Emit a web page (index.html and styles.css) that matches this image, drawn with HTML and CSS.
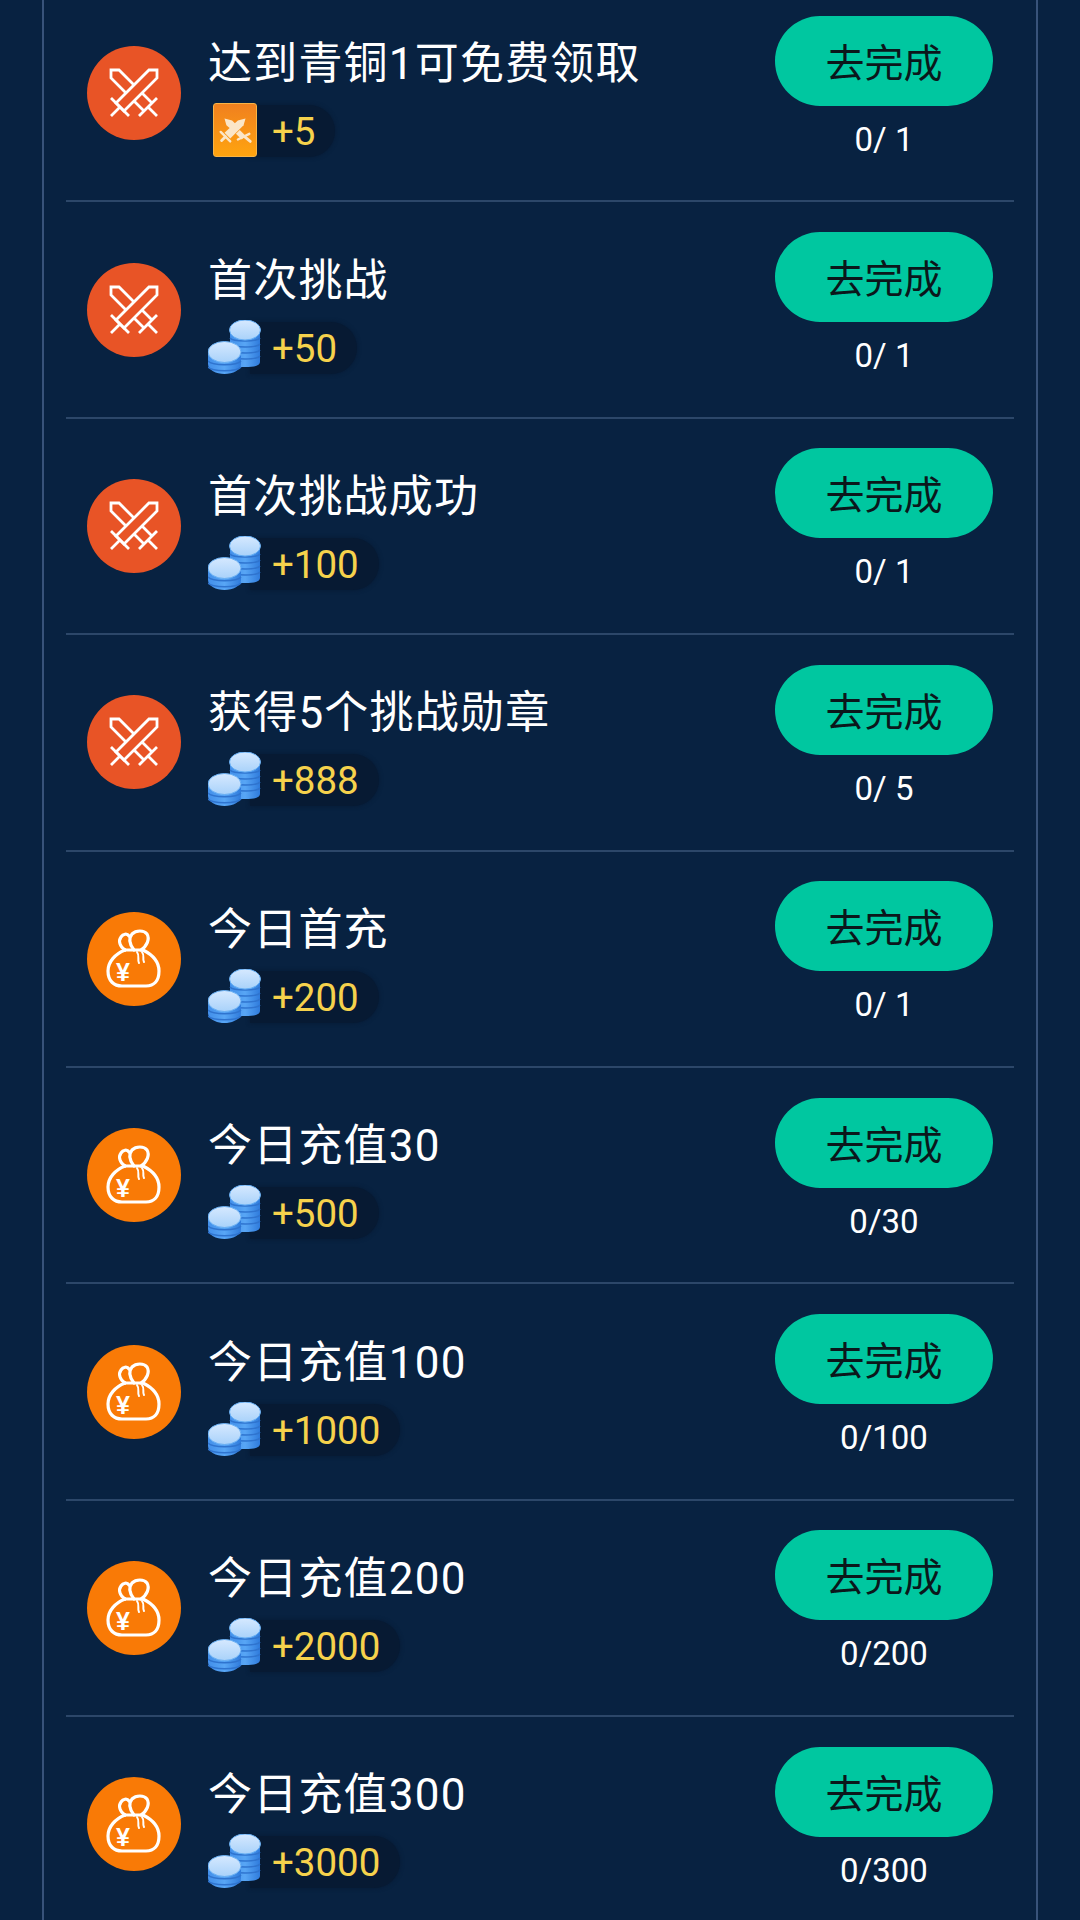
FILE: index.html
```html
<!DOCTYPE html>
<html>
<head>
  <meta charset="UTF-8">
  <title>Tasks</title>
  <meta name="viewport" content="width=device-width, initial-scale=1.0">
  <link rel="stylesheet" href="styles.css">
</head>
<body>
  <svg class="defs" width="0" height="0">
    <defs>
      <symbol id="swords" viewBox="0 0 94 94">
        <g fill="none" stroke="#fff" stroke-width="2.800">
          <path d="M62 24H70V32L37 65L29 57Z"/>
          <path d="M24 52L42 70M33 61L24 70"/>
          <path d="M47 39L32 24H24V32L39 47"/>
          <path d="M55 47L65 57M47 55L57 65M52 70L70 52M61 61L70 70"/>
        </g>
      </symbol>
      <symbol id="bag" viewBox="0 0 94 94">
        <g fill="none" stroke="#fff" stroke-width="3.200" stroke-linecap="round" stroke-linejoin="round">
          <path d="M38 38C28 42 21 50 21 59C21 69 27 74 35 74H59C67 74 72 69 72 59C72 50 66 43 56 38"/>
          <path d="M38 38H56"/>
          <path d="M38 38C33 35 31 29 34 25C36 22 40 21 42 24"/>
          <path d="M47 38C43 33 41 27 45 22C49 18 57 18 60 22C63 27 60 34 54 38"/>
        </g>
        <path d="M50 40C53 44 50 47 52 51M55 40C58 44 55 46 57 50" fill="none" stroke="#fff" stroke-width="2" stroke-linecap="round"/>
        <text x="36" y="69" text-anchor="middle" fill="#fff" font-family="Liberation Sans" font-weight="700" font-size="25">¥</text>
      </symbol>
      <symbol id="card-swords" viewBox="0 0 44 54">
        <g fill="#fbe6c8">
          <path d="M33 15L31 22L17 36L11 30L25 17Z"/>
          <path d="M11 15L19 17L25 23L20 28L13 22Z"/>
          <path d="M27 27L33 33L29 37L23 31Z"/>
        </g>
        <g fill="none" stroke="#fbe6c8" stroke-linecap="round">
          <path d="M7 29L17 39M25 37L37 31" stroke-width="2.500"/>
          <path d="M12 34L8 38M32 34L38 39" stroke-width="3"/>
        </g>
      </symbol>
      <linearGradient id="coinTop" x1="0" y1="0" x2="0" y2="1">
        <stop offset="0" stop-color="#d6e9ff"/>
        <stop offset="1" stop-color="#a9d2fa"/>
      </linearGradient>
      <linearGradient id="coinSide" x1="0" y1="0" x2="1" y2="0">
        <stop offset="0" stop-color="#428fea"/>
        <stop offset="0.5" stop-color="#58a6f5"/>
        <stop offset="1" stop-color="#2f7bdc"/>
      </linearGradient>
      <symbol id="coins" viewBox="0 0 54 54">
        <path d="M22 10H52V42C52 46 46 47 37 47C28 47 22 46 22 42Z" fill="url(#coinSide)"/>
        <path d="M22 18C25 22 49 22 52 18M22 24C25 28 49 28 52 24M22 30C25 34 49 34 52 30M22 36C25 40 49 40 52 36" fill="none" stroke="#2f74cf" stroke-width="1.500"/>
        <ellipse cx="37" cy="10" rx="15.500" ry="10" fill="url(#coinTop)" stroke="#67aff4" stroke-width="1"/>
        <path d="M0 33H33V44C33 50 25 54 16.500 54C8 54 0 50 0 44Z" fill="url(#coinSide)"/>
        <path d="M0 41C4 46 29 46 33 41M0 47C4 52 29 52 33 47" fill="none" stroke="#2f74cf" stroke-width="1.500"/>
        <ellipse cx="16.500" cy="32" rx="16.500" ry="10.500" fill="url(#coinTop)" stroke="#67aff4" stroke-width="1"/>
      </symbol>
    </defs>
  </svg>

  <div class="panel">
    <div class="task">
      <div class="badge badge-fight"><svg><use href="#swords"/></svg></div>
      <div class="info">
        <div class="title">达到青铜1可免费领取</div>
        <div class="reward">
          <span class="reward-icon"><span class="card"><svg><use href="#card-swords"/></svg></span></span>
          <span class="amount">+5</span>
        </div>
      </div>
      <div class="action">
        <div class="go">去完成</div>
        <div class="count">0/ 1</div>
      </div>
    </div>

    <div class="task">
      <div class="badge badge-fight"><svg><use href="#swords"/></svg></div>
      <div class="info">
        <div class="title">首次挑战</div>
        <div class="reward">
          <span class="reward-icon"><svg><use href="#coins"/></svg></span>
          <span class="amount">+50</span>
        </div>
      </div>
      <div class="action">
        <div class="go">去完成</div>
        <div class="count">0/ 1</div>
      </div>
    </div>

    <div class="task">
      <div class="badge badge-fight"><svg><use href="#swords"/></svg></div>
      <div class="info">
        <div class="title">首次挑战成功</div>
        <div class="reward">
          <span class="reward-icon"><svg><use href="#coins"/></svg></span>
          <span class="amount">+100</span>
        </div>
      </div>
      <div class="action">
        <div class="go">去完成</div>
        <div class="count">0/ 1</div>
      </div>
    </div>

    <div class="task">
      <div class="badge badge-fight"><svg><use href="#swords"/></svg></div>
      <div class="info">
        <div class="title">获得5个挑战勋章</div>
        <div class="reward">
          <span class="reward-icon"><svg><use href="#coins"/></svg></span>
          <span class="amount">+888</span>
        </div>
      </div>
      <div class="action">
        <div class="go">去完成</div>
        <div class="count">0/ 5</div>
      </div>
    </div>

    <div class="task">
      <div class="badge badge-pay"><svg><use href="#bag"/></svg></div>
      <div class="info">
        <div class="title">今日首充</div>
        <div class="reward">
          <span class="reward-icon"><svg><use href="#coins"/></svg></span>
          <span class="amount">+200</span>
        </div>
      </div>
      <div class="action">
        <div class="go">去完成</div>
        <div class="count">0/ 1</div>
      </div>
    </div>

    <div class="task">
      <div class="badge badge-pay"><svg><use href="#bag"/></svg></div>
      <div class="info">
        <div class="title">今日充值30</div>
        <div class="reward">
          <span class="reward-icon"><svg><use href="#coins"/></svg></span>
          <span class="amount">+500</span>
        </div>
      </div>
      <div class="action">
        <div class="go">去完成</div>
        <div class="count">0/30</div>
      </div>
    </div>

    <div class="task">
      <div class="badge badge-pay"><svg><use href="#bag"/></svg></div>
      <div class="info">
        <div class="title">今日充值100</div>
        <div class="reward">
          <span class="reward-icon"><svg><use href="#coins"/></svg></span>
          <span class="amount">+1000</span>
        </div>
      </div>
      <div class="action">
        <div class="go">去完成</div>
        <div class="count">0/100</div>
      </div>
    </div>

    <div class="task">
      <div class="badge badge-pay"><svg><use href="#bag"/></svg></div>
      <div class="info">
        <div class="title">今日充值200</div>
        <div class="reward">
          <span class="reward-icon"><svg><use href="#coins"/></svg></span>
          <span class="amount">+2000</span>
        </div>
      </div>
      <div class="action">
        <div class="go">去完成</div>
        <div class="count">0/200</div>
      </div>
    </div>

    <div class="task">
      <div class="badge badge-pay"><svg><use href="#bag"/></svg></div>
      <div class="info">
        <div class="title">今日充值300</div>
        <div class="reward">
          <span class="reward-icon"><svg><use href="#coins"/></svg></span>
          <span class="amount">+3000</span>
        </div>
      </div>
      <div class="action">
        <div class="go">去完成</div>
        <div class="count">0/300</div>
      </div>
    </div>
  </div>
</body>
</html>
```

FILE: styles.css
```css
html, body {
  height: 100%;
}

body {
  margin: 0;
  background-color: #082241;
  font-family: Roboto, "Noto Sans CJK SC", sans-serif;
  color: #fff;
  overflow: hidden;
}

.defs {
  display: block;
  height: 0;
}

.panel {
  margin: -14px 42px 0;
  padding: 0 22px;
  border-left: 2px solid #38537a;
  border-right: 2px solid #38537a;
}

.task {
  display: flex;
  align-items: center;
  box-sizing: border-box;
  height: 216.4px;
  padding-left: 21px;
  border-bottom: 2px solid #2c4769;
}

.badge {
  flex: none;
  width: 94px;
  height: 94px;
  border-radius: 50%;
}

.badge svg {
  display: block;
  width: 94px;
  height: 94px;
}

.badge-fight {
  background-color: #e85426;
}

.badge-pay {
  background-color: #f97a06;
}

.info {
  flex: 1;
  margin-left: 27px;
  margin-top: 7px;
}

.title {
  font-size: 44px;
  line-height: 56px;
  letter-spacing: 1.2px;
}

.reward {
  display: flex;
  align-items: center;
  margin-top: 13px;
}

.reward-icon {
  flex: none;
  position: relative;
  z-index: 1;
  width: 54px;
  height: 54px;
  margin-top: -2px;
}

.reward-icon svg {
  display: block;
  width: 54px;
  height: 54px;
}

.card {
  display: block;
  box-sizing: border-box;
  width: 44px;
  height: 54px;
  margin-left: 5px;
  border: 1px solid #f9b445;
  border-radius: 3px;
  background: linear-gradient(#f0801f, #ffa40f);
}

.card svg {
  width: 42px;
  height: 52px;
}

.amount {
  height: 52px;
  margin-left: -12px;
  padding: 0 20px 0 22px;
  border-radius: 0 26px 26px 0;
  background-color: #071a33;
  box-shadow: 0 0 4px #071a33;
  color: #f6d24c;
  font-size: 38.500px;
  line-height: 54px;
}

.action {
  flex: none;
  display: flex;
  flex-direction: column;
  align-items: center;
  width: 218px;
  margin-right: 21px;
  margin-top: -11px;
}

.go {
  width: 218px;
  height: 90px;
  border-radius: 45px;
  background-color: #00c7a0;
  color: #0b171b;
  font-size: 39px;
  line-height: 97px;
  text-align: center;
}

.count {
  margin-top: 14px;
  font-size: 33px;
  line-height: 40px;
}
```
